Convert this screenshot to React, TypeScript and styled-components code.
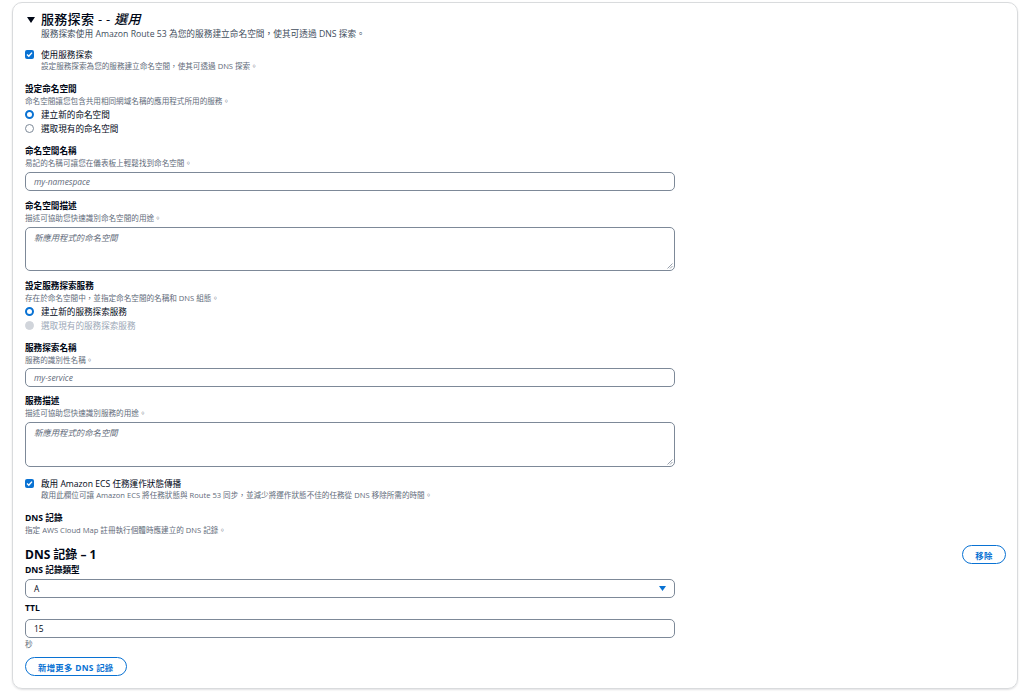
import React from "react";
import styled, { createGlobalStyle } from "styled-components";

const GlobalStyle = createGlobalStyle`
  html, body { margin: 0; padding: 0; background: #ffffff; }
  body { font-family: "Open Sans", "Noto Sans CJK TC", sans-serif; color: #000716; }
  * { box-sizing: border-box; }
`;

const Page = styled.div`
  width: 1024px;
  height: 694px;
  padding: 2px 6px 5px 12px;
`;

const Card = styled.section`
  border: 1px solid #d9dbdd;
  border-radius: 10px;
  box-shadow: 0 1px 2px rgba(0, 7, 22, 0.12);
  padding: 8px 11px 12px 12px;
  height: 687px;
  display: flex;
  flex-direction: column;
`;

const TitleRow = styled.div`
  display: flex;
  align-items: center;
  gap: 6px;
  height: 17px;
  padding-left: 2px;
`;

const Title = styled.h2`
  margin: 0;
  font-size: 13px;
  line-height: 17px;
  height: 17px;
  font-weight: 500;
  letter-spacing: 0.3px;
  em { font-style: italic; font-weight: 500; }
`;

const HeaderDesc = styled.p`
  margin: 0 0 0 16px;
  font-size: 8.7px;
  line-height: 12px;
  height: 12px;
  color: #414d5c;
`;

const Label = styled.div<{ $mt: number }>`
  margin-top: ${(p) => p.$mt}px;
  font-size: 8.6px;
  line-height: 12px;
  height: 12px;
  font-weight: 700;
  color: #000716;
`;

const Desc = styled.div<{ $indent?: boolean }>`
  font-size: 7.6px;
  line-height: 12px;
  height: 12px;
  color: #5f6b7a;
  padding-left: ${(p) => (p.$indent ? "16px" : "0")};
`;

const OptionRow = styled.label<{ $mt?: number; $disabled?: boolean }>`
  display: flex;
  align-items: center;
  gap: 7px;
  height: 14px;
  margin-top: ${(p) => p.$mt ?? 0}px;
  font-size: 8.6px;
  color: ${(p) => (p.$disabled ? "#9ba7b6" : "#000716")};
`;

const CheckRow = styled(OptionRow)`
  height: 12px;
`;

const CheckBox = styled.span`
  width: 9px;
  height: 9px;
  border-radius: 2px;
  background: #0972d3;
  display: flex;
  align-items: center;
  justify-content: center;
  flex: none;
`;

const Radio = styled.span<{ $state: "on" | "off" | "disabled" }>`
  width: 9px;
  height: 9px;
  border-radius: 50%;
  flex: none;
  border: ${(p) =>
    p.$state === "on"
      ? "2.6px solid #0972d3"
      : p.$state === "off"
      ? "1.2px solid #7d8998"
      : "1.2px solid #d1d5db"};
  background: ${(p) => (p.$state === "disabled" ? "#d1d5db" : "#ffffff")};
`;

const Input = styled.div<{ $mt: number; $h: number; $italic?: boolean }>`
  margin-top: ${(p) => p.$mt}px;
  width: 650px;
  height: ${(p) => p.$h}px;
  flex: none;
  border: 1px solid #7d8998;
  border-radius: 5px;
  padding: 0 8px;
  display: flex;
  align-items: ${(p) => (p.$h > 25 ? "flex-start" : "center")};
  padding-top: ${(p) => (p.$h > 25 ? "3px" : "0")};
  font-size: 8.4px;
  font-style: ${(p) => (p.$italic ? "italic" : "normal")};
  color: ${(p) => (p.$italic ? "#5f6b7a" : "#000716")};
  position: relative;
  justify-content: space-between;
`;

const Grip = styled.svg`
  position: absolute;
  right: 1px;
  bottom: 1px;
`;

const RecordHeader = styled.div`
  margin-top: 10px;
  display: flex;
  align-items: center;
  justify-content: space-between;
  height: 17px;
`;

const RecordTitle = styled.h3`
  margin: 0;
  font-size: 12px;
  line-height: 17px;
  font-weight: 700;
`;

const PillButton = styled.button<{ $mt?: number }>`
  margin-top: ${(p) => p.$mt ?? 0}px;
  align-self: flex-start;
  height: 19px;
  flex: none;
  border: 1.5px solid #0972d3;
  border-radius: 10px;
  background: #ffffff;
  color: #0972d3;
  font-family: "Open Sans", "Noto Sans CJK TC", sans-serif;
  font-size: 8.4px;
  font-weight: 700;
  padding: 0 12px;
  letter-spacing: 0.3px;
  cursor: pointer;
`;

const RemoveButton = styled(PillButton)`
  align-self: center;
  width: 44px;
  padding: 0;
`;

const Unit = styled.div`
  font-size: 7.6px;
  line-height: 12px;
  height: 12px;
  color: #5f6b7a;
`;

const Check = () => (
  <svg width="7" height="7" viewBox="0 0 7 7">
    <path d="M1 3.6 L2.8 5.3 L6 1.6" fill="none" stroke="#fff" strokeWidth="1.4" />
  </svg>
);

const ResizeGrip = () => (
  <Grip width="6" height="6" viewBox="0 0 6 6">
    <path d="M5.5 0.5 L0.5 5.5 M5.5 3 L3 5.5" stroke="#7d8998" strokeWidth="0.8" />
  </Grip>
);

export default function App() {
  return (
    <Page>
      <GlobalStyle />
      <Card>
        <TitleRow>
          <svg width="8" height="6" viewBox="0 0 8 6">
            <path d="M0 0 L8 0 L4 6 Z" fill="#000716" />
          </svg>
          <Title>
            服務探索 - - <em>選用</em>
          </Title>
        </TitleRow>
        <HeaderDesc>服務探索使用 Amazon Route 53 為您的服務建立命名空間，使其可透過 DNS 探索。</HeaderDesc>

        <CheckRow $mt={8}>
          <CheckBox>
            <Check />
          </CheckBox>
          使用服務探索
        </CheckRow>
        <Desc $indent>設定服務探索為您的服務建立命名空間，使其可透過 DNS 探索。</Desc>

        <Label $mt={11}>設定命名空間</Label>
        <Desc>命名空間讓您包含共用相同網域名稱的應用程式所用的服務。</Desc>
        <OptionRow $mt={1}>
          <Radio $state="on" />
          建立新的命名空間
        </OptionRow>
        <OptionRow>
          <Radio $state="off" />
          選取現有的命名空間
        </OptionRow>

        <Label $mt={9}>命名空間名稱</Label>
        <Desc>易記的名稱可讓您在儀表板上輕鬆找到命名空間。</Desc>
        <Input $mt={3} $h={19} $italic>
          my-namespace
        </Input>

        <Label $mt={9}>命名空間描述</Label>
        <Desc>描述可協助您快速識別命名空間的用途。</Desc>
        <Input $mt={3} $h={44} $italic>
          新應用程式的命名空間
          <ResizeGrip />
        </Input>

        <Label $mt={9}>設定服務探索服務</Label>
        <Desc>存在於命名空間中，並指定命名空間的名稱和 DNS 組態。</Desc>
        <OptionRow $mt={1}>
          <Radio $state="on" />
          建立新的服務探索服務
        </OptionRow>
        <OptionRow $disabled>
          <Radio $state="disabled" />
          選取現有的服務探索服務
        </OptionRow>

        <Label $mt={10}>服務探索名稱</Label>
        <Desc>服務的識別性名稱。</Desc>
        <Input $mt={2} $h={19} $italic>
          my-service
        </Input>

        <Label $mt={8}>服務描述</Label>
        <Desc>描述可協助您快速識別服務的用途。</Desc>
        <Input $mt={3} $h={45} $italic>
          新應用程式的命名空間
          <ResizeGrip />
        </Input>

        <CheckRow $mt={10}>
          <CheckBox>
            <Check />
          </CheckBox>
          啟用 Amazon ECS 任務運作狀態傳播
        </CheckRow>
        <Desc $indent>
          啟用此欄位可讓 Amazon ECS 將任務狀態與 Route 53 同步，並減少將運作狀態不佳的任務從 DNS 移除所需的時間。
        </Desc>

        <Label $mt={11}>DNS 記錄</Label>
        <Desc>指定 AWS Cloud Map 註冊執行個體時應建立的 DNS 記錄。</Desc>

        <RecordHeader>
          <RecordTitle>DNS 記錄 – 1</RecordTitle>
          <RemoveButton>移除</RemoveButton>
        </RecordHeader>

        <Label $mt={1}>DNS 記錄類型</Label>
        <Input $mt={3} $h={19}>
          A
          <svg width="7" height="5" viewBox="0 0 7 5">
            <path d="M0 0 L7 0 L3.5 5 Z" fill="#0972d3" />
          </svg>
        </Input>

        <Label $mt={4}>TTL</Label>
        <Input $mt={5} $h={19}>
          15
        </Input>
        <Unit>秒</Unit>

        <PillButton $mt={7}>新增更多 DNS 記錄</PillButton>
      </Card>
    </Page>
  );
}
